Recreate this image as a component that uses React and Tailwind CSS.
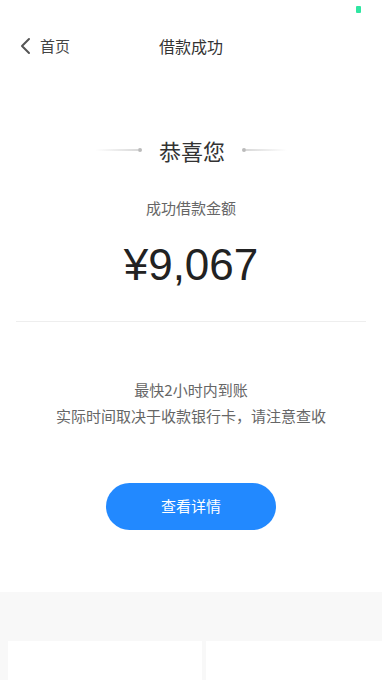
import React from "react";

export default function App() {
  const font = { fontFamily: '"Noto Sans CJK SC", "Noto Sans", sans-serif' };

  return (
    <div className="min-h-[680px] w-[382px] bg-white flex flex-col overflow-hidden" style={font}>
      {/* status bar */}
      <div className="h-[20px] flex justify-end pr-[21px] pt-[6px]">
        <div className="w-[5px] h-[7px] rounded-[1px] bg-[#2fe6a2]" />
      </div>

      {/* nav */}
      <div className="h-[52px] grid grid-cols-[1fr_auto_1fr] items-center">
        <div className="flex items-center pl-[19px] gap-[9px] text-[15px] text-[#444]">
          <svg width="12" height="18" viewBox="0 0 12 18" fill="none">
            <path d="M10 2 L3 9 L10 16" stroke="#555" strokeWidth="2" strokeLinecap="round" strokeLinejoin="round" />
          </svg>
          <span>首页</span>
        </div>
        <div className="text-[16px] text-[#333]">借款成功</div>
        <div />
      </div>

      {/* congrats */}
      <div className="mt-[63px] flex items-center justify-center">
        <div className="flex items-center w-[47px]">
          <div className="h-[2px] flex-1 bg-gradient-to-r from-transparent to-[#d9d9d9]" />
          <div className="w-[4px] h-[4px] rounded-full bg-[#bbb]" />
        </div>
        <div className="mx-[17px] text-[22px] leading-[30px] text-[#333]">恭喜您</div>
        <div className="flex items-center w-[45px]">
          <div className="w-[4px] h-[4px] rounded-full bg-[#bbb]" />
          <div className="h-[2px] flex-1 bg-gradient-to-r from-[#d9d9d9] to-transparent" />
        </div>
      </div>

      <div className="mt-[33px] text-center text-[15px] leading-[20px] text-[#666]">成功借款金额</div>

      <div
        className="mt-[21px] text-center text-[44px] leading-[52px] text-[#222]"
        style={{ fontFamily: '"Liberation Sans", Arial, sans-serif' }}
      >
        ¥9,067
      </div>

      <div className="mt-[30px] mx-4 h-px bg-[#eeeeee]" />

      <div className="mt-[55px] text-center text-[15px] leading-[26px] text-[#666]">
        <div>最快2小时内到账</div>
        <div>实际时间取决于收款银行卡，请注意查收</div>
      </div>

      <div className="mt-[54px] flex justify-center">
        <button className="w-[170px] h-[47px] rounded-full bg-[#2289ff] text-white text-[15px]">
          查看详情
        </button>
      </div>

      {/* bottom area */}
      <div className="mt-[62px] flex-1 bg-[#f8f8f8] pt-[49px] pl-2 flex gap-1 overflow-hidden">
        <div className="w-[194px] h-[40px] shrink-0 bg-white" />
        <div className="w-[194px] h-[40px] shrink-0 bg-white" />
      </div>
    </div>
  );
}
